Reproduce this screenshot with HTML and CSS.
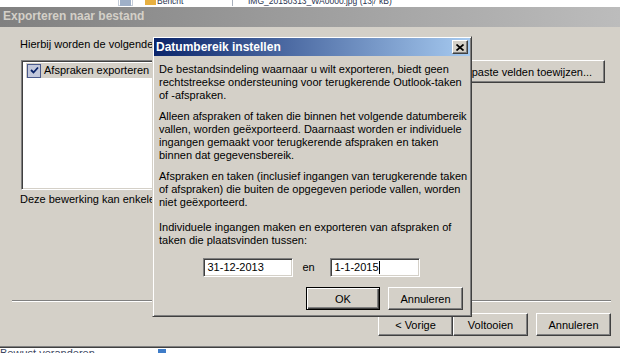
FILE: index.html
```html
<!DOCTYPE html>
<html lang="nl">
<head>
  <meta charset="UTF-8" />
  <title>Exporteren naar bestand</title>
  <link rel="stylesheet" href="styles.css">
</head>
<body>
  <div class="screen">
    <div class="taskstrip">
      <div class="task-row">
        <span class="task task-small"><i class="ico ico-grey"></i></span>
        <span class="task task-mail"><i class="ico ico-mail"></i>Bericht</span>
        <span class="task task-img"><i class="ico ico-img"></i>IMG_20150313_WA0000.jpg (137 kB)</span>
      </div>
    </div>

    <div class="wizard">
      <div class="wizard-title">Exporteren naar bestand</div>
      <div class="wizard-body">
        <p class="lead">Hierbij worden de volgende</p>
        <div class="actions">
          <div class="listbox">
            <div class="list-item">
              <span class="check">
                <svg width="9" height="9" viewBox="0 0 9 9"><path d="M1 4 L3.5 6.5 L8 1.5" fill="none" stroke="#0a246a" stroke-width="1.8"/></svg>
              </span>
              <span class="item-label">Afspraken exporteren</span>
            </div>
          </div>
          <button class="btn btn-map">Aangepaste velden toewijzen...</button>
        </div>
        <p class="note">Deze bewerking kan enkele</p>
        <div class="separator"></div>
        <div class="wizard-buttons">
          <button class="btn">&lt; Vorige</button>
          <button class="btn">Voltooien</button>
          <button class="btn btn-cancel">Annuleren</button>
        </div>
      </div>
    </div>

    <div class="bottomstrip">
      <span class="bottom-text">Bewust veranderen</span>
      <i class="bottom-ico"></i>
    </div>

    <div class="modal">
      <div class="modal-title">
        <span>Datumbereik instellen</span>
        <button class="close-btn">
          <svg width="8" height="7" viewBox="0 0 8 7"><path d="M0.5 0.5 L7.5 6.5 M7.5 0.5 L0.5 6.5" stroke="#000" stroke-width="1.7"/></svg>
        </button>
      </div>
      <div class="modal-body">
        <p class="p1">De bestandsindeling waarnaar u wilt exporteren, biedt geen<br>rechtstreekse ondersteuning voor terugkerende Outlook-taken<br>of -afspraken.</p>
        <p class="p2">Alleen afspraken of taken die binnen het volgende datumbereik<br>vallen, worden geëxporteerd. Daarnaast worden er individuele<br>ingangen gemaakt voor terugkerende afspraken en taken<br>binnen dat gegevensbereik.</p>
        <p class="p3">Afspraken en taken (inclusief ingangen van terugkerende taken<br>of afspraken) die buiten de opgegeven periode vallen, worden<br>niet geëxporteerd.</p>
        <p class="p4">Individuele ingangen maken en exporteren van afspraken of<br>taken die plaatsvinden tussen:</p>
        <div class="date-row">
          <div class="edit">31-12-2013</div>
          <span class="en">en</span>
          <div class="edit">1-1-2015<i class="caret"></i></div>
        </div>
        <div class="modal-buttons">
          <button class="btn btn-default">OK</button>
          <button class="btn">Annuleren</button>
        </div>
      </div>
    </div>
  </div>
</body>
</html>
```

FILE: styles.css
```css
* {
  box-sizing: border-box;
}
body {
  margin: 0;
  padding: 0;
  font-family: "Liberation Sans", Arial, sans-serif;
  font-size: 11px;
  color: #000;
  background: #fff;
}
p {
  margin: 0;
}
.screen {
  position: relative;
  width: 620px;
  height: 353px;
  overflow: hidden;
  display: flex;
  flex-direction: column;
}
.taskstrip {
  height: 7px;
  overflow: hidden;
  background: #fff;
}
.task-row {
  display: flex;
  margin-top: -4px;
  padding-left: 118px;
  font-size: 8.5px;
  line-height: 10px;
  color: #2a3450;
}
.task {
  display: flex;
  align-items: flex-start;
  height: 10px;
  white-space: nowrap;
}
.task-small {
  width: 15px;
  padding-left: 1px;
  border: 1px solid #c4ccd8;
  margin-right: 12px;
}
.task-mail {
  width: 88px;
  border-right: 1px solid #a8b0bc;
}
.task-img {
  width: 126px;
  margin-left: 14px;
  border-right: 1px solid #a8b0bc;
}
.ico {
  display: inline-block;
  width: 11px;
  height: 9px;
  margin-right: 1px;
}
.ico-grey {
  background: #9fb0c8;
}
.ico-mail {
  background: #e8b040;
}
.ico-img {
  background: #4a86c8;
}
.wizard {
  height: 341px;
  background: #d4d0c8;
  border-bottom: 1px solid #404040;
  box-shadow: inset 0 -1px #808080;
  display: flex;
  flex-direction: column;
}
.wizard-title {
  height: 20px;
  padding: 2px 0 0 3px;
  line-height: 14px;
  font-size: 12px;
  font-weight: bold;
  color: #d4d0c8;
  background: linear-gradient(to right, #808080, #bcbcbc);
}
.wizard-body {
  padding: 11px 9px 0 20px;
}
.lead {
  line-height: 13px;
  white-space: nowrap;
}
.actions {
  display: flex;
  align-items: flex-start;
  margin-top: 9px;
}
.listbox {
  width: 384px;
  height: 130px;
  margin-left: 1px;
  background: #fff;
  border: 1px solid;
  border-color: #808080 #fff #fff #808080;
  box-shadow: inset 1px 1px #404040, inset -1px -1px #d4d0c8;
  padding: 2px 0 0 4px;
}
.list-item {
  display: flex;
  align-items: center;
  height: 15px;
  background: #d4d0c8;
  width: 200px;
}
.check {
  display: flex;
  align-items: center;
  justify-content: center;
  width: 14px;
  height: 14px;
  margin: 0 3px 0 1px;
  border: 1px solid #4a5a8c;
  background: #c2c8dc;
}
.item-label {
  line-height: 13px;
  white-space: nowrap;
}
.btn {
  font-family: inherit;
  font-size: 11px;
  color: #000;
  width: 75px;
  height: 23px;
  padding: 0;
  background: #d4d0c8;
  border: 1px solid;
  border-color: #fff #404040 #404040 #fff;
  box-shadow: inset -1px -1px #808080;
  text-align: center;
}
.btn-map {
  width: 188px;
  margin-left: 12px;
  padding-left: 10px;
}
.note {
  margin-top: 3px;
  line-height: 13px;
  white-space: nowrap;
}
.separator {
  width: 599px;
  height: 2px;
  margin: 94px 0 0 -8px;
  border-top: 1px solid #808080;
  border-bottom: 1px solid #fff;
}
.wizard-buttons {
  display: flex;
  justify-content: flex-end;
  margin-top: 11px;
}
.btn-cancel {
  margin-left: 8px;
}
.bottomstrip {
  flex: 1;
  display: flex;
  overflow: hidden;
  background: #fff;
}
.bottom-text {
  margin-top: -1px;
  font-size: 11px;
  line-height: 13px;
  color: #3c4660;
  white-space: nowrap;
}
.bottom-ico {
  width: 8px;
  height: 6px;
  margin: 1px 0 0 63px;
  background: #3e7cc8;
}
.modal {
  position: absolute;
  left: 152px;
  top: 36px;
  width: 320px;
  height: 281px;
  background: #d4d0c8;
  border: 1px solid;
  border-color: #d4d0c8 #404040 #404040 #d4d0c8;
  box-shadow: inset 1px 1px #fff, inset -1px -1px #808080;
  padding: 1px;
}
.modal-title {
  display: flex;
  align-items: center;
  justify-content: space-between;
  height: 18px;
  padding: 0 2px;
  font-size: 12px;
  font-weight: bold;
  color: #fff;
  line-height: 17px;
  background: linear-gradient(to right, #0a246a, #a6caf0);
}
.close-btn {
  display: flex;
  align-items: center;
  justify-content: center;
  width: 16px;
  height: 14px;
  padding: 0;
  background: #d4d0c8;
  border: 1px solid;
  border-color: #fff #404040 #404040 #fff;
  box-shadow: inset -1px -1px #808080;
}
.modal-body {
  padding: 7px 5px 0 5px;
  line-height: 13px;
  white-space: nowrap;
}
.p2 {
  margin-top: 8px;
}
.p3 {
  margin-top: 8px;
}
.p4 {
  margin-top: 12px;
}
.date-row {
  display: flex;
  justify-content: center;
  align-items: center;
  margin-top: 11px;
  padding-right: 2px;
}
.edit {
  display: flex;
  align-items: center;
  width: 90px;
  height: 19px;
  padding-left: 4px;
  background: #fff;
  border: 1px solid;
  border-color: #808080 #fff #fff #808080;
  box-shadow: inset 1px 1px #404040, inset -1px -1px #d4d0c8;
}
.en {
  width: 37px;
  padding-left: 10px;
}
.caret {
  display: inline-block;
  width: 1px;
  height: 13px;
  background: #000;
}
.modal-buttons {
  display: flex;
  justify-content: flex-end;
  gap: 8px;
  margin-top: 10px;
  padding-right: 2px;
}
.btn-default {
  width: 74px;
  border-color: #000;
  box-shadow: inset 1px 1px #fff, inset -1px -1px #404040, inset -2px -2px #808080;
}
```
